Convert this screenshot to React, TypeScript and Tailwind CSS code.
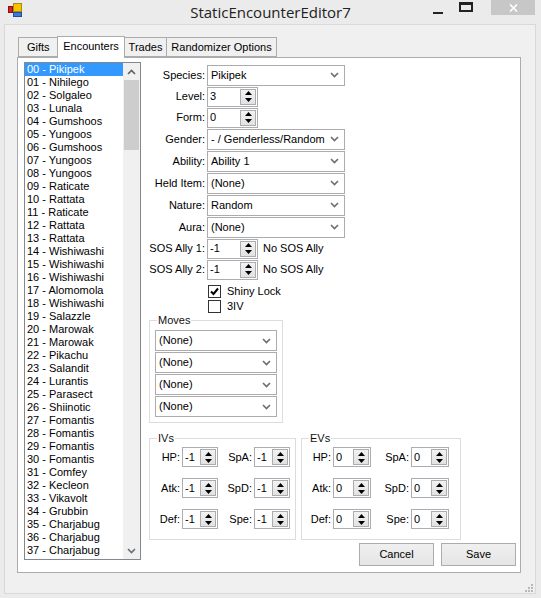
import React from "react";

const F = { fontFamily: '"Liberation Sans", Arial, sans-serif' } as React.CSSProperties;

const pokes = [
  "Pikipek","Nihilego","Solgaleo","Lunala","Gumshoos","Yungoos","Gumshoos","Yungoos","Yungoos","Raticate",
  "Rattata","Raticate","Rattata","Rattata","Wishiwashi","Wishiwashi","Wishiwashi","Alomomola","Wishiwashi","Salazzle",
  "Marowak","Marowak","Pikachu","Salandit","Lurantis","Parasect","Shiinotic","Fomantis","Fomantis","Fomantis",
  "Fomantis","Comfey","Kecleon","Vikavolt","Grubbin","Charjabug","Charjabug","Charjabug",
];

function Chevron() {
  return (
    <svg width="9" height="6" viewBox="0 0 9 6" className="shrink-0">
      <path d="M1 1 L4.5 4.5 L8 1" fill="none" stroke="#6d6d6d" strokeWidth="1.6" />
    </svg>
  );
}

function Combo({ value, w = "w-[138px]" }: { value: string; w?: string }) {
  return (
    <div className={`${w} h-[21px] border border-[#acacac] bg-white flex items-center pl-[3px] pr-[5px] text-[11px] text-black`}>
      <span className="flex-1 truncate">{value}</span>
      <Chevron />
    </div>
  );
}

function Spin() {
  return (
    <div className="w-[16px] h-[16px] border border-[#acacac] bg-gradient-to-b from-[#f2f2f2] to-[#e2e2e2] flex flex-col items-center justify-center gap-[3px] mr-[1px]">
      <svg width="7" height="4" viewBox="0 0 7 4"><path d="M0 4 L3.5 0 L7 4 Z" fill="#000" /></svg>
      <svg width="7" height="4" viewBox="0 0 7 4"><path d="M0 0 L3.5 4 L7 0 Z" fill="#000" /></svg>
    </div>
  );
}

function Num({ value, w = "w-[51px]" }: { value: string; w?: string }) {
  return (
    <div className={`${w} h-[20px] border border-[#abadb3] bg-white flex items-center pl-[2px] text-[11px] text-black shrink-0`}>
      <span className="flex-1">{value}</span>
      <Spin />
    </div>
  );
}

function Check({ checked }: { checked?: boolean }) {
  return (
    <div className="w-[13px] h-[13px] border border-[#333] bg-white flex items-center justify-center">
      {checked && (
        <svg width="11" height="11" viewBox="0 0 11 11">
          <path d="M2 5.5 L4.5 8 L9 2.5" fill="none" stroke="#000" strokeWidth="2" />
        </svg>
      )}
    </div>
  );
}

function Row({ label, children, h = "h-[22px]" }: { label: string; children: React.ReactNode; h?: string }) {
  return (
    <div className={`flex items-center ${h}`}>
      <div className="w-[62px] text-right pr-[2px] text-[11px] text-black whitespace-nowrap">{label}</div>
      {children}
    </div>
  );
}

function StatGrid({ title, vals, numW, labelW, gapW }: { title: string; vals: string[]; numW: string; labelW: string; gapW: string }) {
  const rows = [["HP:", "SpA:"], ["Atk:", "SpD:"], ["Def:", "Spe:"]];
  return (
    <fieldset className="border border-[#dcdcdc] px-[5px] pb-[10px] pt-0 mx-0 min-w-0">
      <legend className="text-[11px] text-[#111] px-[1px] ml-[2px] leading-[12px]">{title}</legend>
      <div className="flex flex-col gap-[11px] mt-[3px]">
        {rows.map((r, i) => (
          <div key={i} className="flex items-center">
            <div className={`${labelW} shrink-0 text-right pr-[2px] text-[11px]`}>{r[0]}</div>
            <Num value={vals[i * 2]} w={numW} />
            <div className={`${gapW} shrink-0 text-right pr-[2px] text-[11px]`}>{r[1]}</div>
            <Num value={vals[i * 2 + 1]} w={numW} />
          </div>
        ))}
      </div>
    </fieldset>
  );
}

export default function App() {
  return (
    <div style={F} className="w-[541px] h-[598px] bg-[#ebebeb] relative overflow-hidden text-black select-none">
      {/* title bar */}
      <div className="h-[24px] flex items-start relative">
        <div className="absolute left-[8px] top-[3px] w-[14px] h-[14px]">
          <div className="absolute left-[5px] top-0 w-[9px] h-[9px] bg-[#f5c400] border border-[#b08a00]" />
          <div className="absolute left-0 top-[3px] w-[5px] h-[7px] bg-[#d8202a] border border-[#8a1014]" />
          <div className="absolute left-[5px] top-[9px] w-[9px] h-[5px] bg-[#3b7ad8] border border-[#1e4f9c]" />
        </div>
        <div className="absolute left-0 right-0 top-[1px] text-center text-[15px] text-[#222]" style={{ fontFamily: '"Open Sans", "Noto Sans", sans-serif' }}>
          StaticEncounterEditor7
        </div>
        <div className="absolute left-[433px] top-[12px] w-[10px] h-[2px] bg-[#222]" />
        <div className="absolute left-[459px] top-[2px] w-[14px] h-[10px] border-[2px] border-t-[3px] border-[#222]" />
        <div className="absolute left-[491px] top-0 w-[44px] h-[15px] bg-[#c7c7c7] flex items-center justify-center">
          <svg width="9" height="8" viewBox="0 0 9 8"><path d="M1 0.5 L8 7.5 M8 0.5 L1 7.5" stroke="#fff" strokeWidth="1.6" /></svg>
        </div>
      </div>

      {/* client area */}
      <div className="absolute left-[4px] top-[24px] w-[532px] h-[570px] border border-[#d9d9d9] bg-[#f0f0f0] pl-[12px] pt-[10px]">
        {/* tabs */}
        <div className="flex items-end h-[22px] pl-[1px] text-[11px]">
          <div className="h-[20px] w-[39px] pl-[8px] border border-[#acacac] border-r-0 bg-[#f0f0f0] flex items-center">Gifts</div>
          <div className="h-[22px] w-[68px] justify-center border border-[#acacac] border-b-0 bg-white flex items-center pb-[3px] relative z-10 -mb-[1px]">Encounters</div>
          <div className="h-[20px] w-[42px] justify-center border border-[#acacac] border-l-0 bg-[#f0f0f0] flex items-center">Trades</div>
          <div className="h-[20px] w-[110px] justify-center border border-[#acacac] border-l-0 bg-[#f0f0f0] flex items-center">Randomizer Options</div>
        </div>
        {/* tab page */}
        <div className="w-[504px] h-[516px] border border-[#acacac] bg-white flex pl-[6px] pt-[4px]">
          {/* listbox */}
          <div className="w-[117px] h-[498px] border border-[#828790] bg-white flex shrink-0">
            <div className="flex-1 overflow-hidden">
              {pokes.map((p, i) => (
                <div
                  key={i}
                  className={`h-[13px] leading-[13px] text-[11px] pl-[2px] whitespace-nowrap ${i === 0 ? "bg-[#3399ff] text-white" : "text-black"}`}
                >
                  {String(i).padStart(2, "0")} - {p}
                </div>
              ))}
            </div>
            <div className="w-[17px] bg-[#f0f0f0] flex flex-col items-center">
              <div className="h-[17px] flex items-center justify-center">
                <svg width="9" height="6" viewBox="0 0 9 6"><path d="M1 5 L4.5 1.5 L8 5" fill="none" stroke="#606060" strokeWidth="1.6" /></svg>
              </div>
              <div className="w-[15px] h-[70px] bg-[#cdcdcd]" />
              <div className="flex-1" />
              <div className="h-[17px] flex items-center justify-center">
                <Chevron />
              </div>
            </div>
          </div>

          {/* right side */}
          <div className="flex flex-col pl-[4px] pt-[2px]">
            <Row label="Species:"><Combo value="Pikipek" /></Row>
            <Row label="Level:" h="h-[21px]"><Num value="3" /></Row>
            <Row label="Form:" h="h-[21px]"><Num value="0" /></Row>
            <Row label="Gender:"><Combo value="- / Genderless/Random" /></Row>
            <Row label="Ability:"><Combo value="Ability 1" /></Row>
            <Row label="Held Item:"><Combo value="(None)" /></Row>
            <Row label="Nature:"><Combo value="Random" /></Row>
            <Row label="Aura:"><Combo value="(None)" /></Row>
            <Row label="SOS Ally 1:" h="h-[21px]"><Num value="-1" /><span className="text-[11px] ml-[5px]">No SOS Ally</span></Row>
            <Row label="SOS Ally 2:" h="h-[21px]"><Num value="-1" /><span className="text-[11px] ml-[5px]">No SOS Ally</span></Row>
            <div className="flex items-center h-[15px] mt-[4px] pl-[63px] gap-[6px] text-[11px]"><Check checked />Shiny Lock</div>
            <div className="flex items-center h-[15px] pl-[63px] gap-[6px] text-[11px]"><Check />3IV</div>

            <fieldset className="w-[134px] border border-[#dcdcdc] px-[5px] pb-[5px] pt-0 mt-[0px] ml-[4px]">
              <legend className="text-[11px] text-[#111] px-[1px] ml-[2px] leading-[12px]">Moves</legend>
              <div className="flex flex-col gap-[1px] mt-[4px]">
                <Combo value="(None)" w="w-[122px]" />
                <Combo value="(None)" w="w-[122px]" />
                <Combo value="(None)" w="w-[122px]" />
                <Combo value="(None)" w="w-[122px]" />
              </div>
            </fieldset>

            <div className="flex gap-[5px] mt-[9px] ml-[4px]">
              <div className="w-[147px]">
                <StatGrid title="IVs" vals={["-1","-1","-1","-1","-1","-1"]} numW="w-[36px]" labelW="w-[27px]" gapW="w-[36px]" />
              </div>
              <div className="w-[160px]">
                <StatGrid title="EVs" vals={["0","0","0","0","0","0"]} numW="w-[38px]" labelW="w-[26px]" gapW="w-[40px]" />
              </div>
            </div>

            <div className="flex gap-[7px] mt-[3px] ml-[214px]">
              <button className="w-[75px] h-[23px] border border-[#acacac] bg-gradient-to-b from-[#f0f0f0] to-[#e5e5e5] text-[11px]">Cancel</button>
              <button className="w-[75px] h-[23px] border border-[#acacac] bg-gradient-to-b from-[#f0f0f0] to-[#e5e5e5] text-[11px]">Save</button>
            </div>
          </div>
        </div>
      </div>
      {/* resize grip */}
      <div className="absolute right-[8px] bottom-[6px] grid grid-cols-3 gap-[1px] w-[8px]">
        {[0,1,2,3,4,5,6,7,8].map((i) => (
          <div key={i} className={`w-[2px] h-[2px] ${[2,4,5,6,7,8].includes(i) ? "bg-[#b8b8b8]" : ""}`} />
        ))}
      </div>
    </div>
  );
}
